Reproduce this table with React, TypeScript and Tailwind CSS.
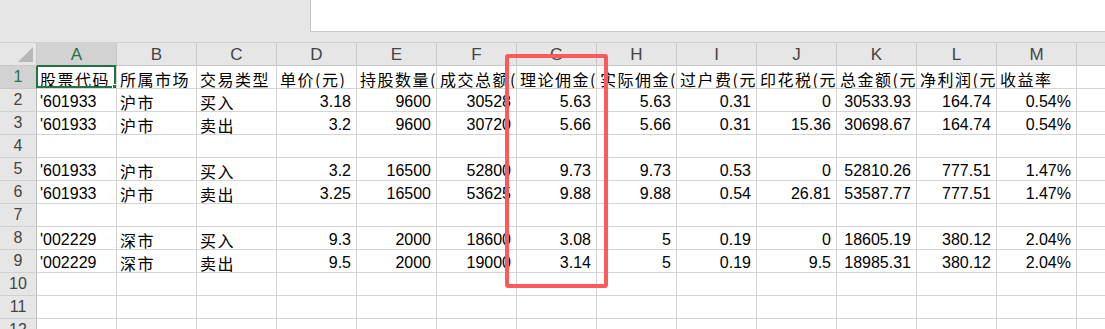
import React from "react";

type Kind = "t" | "n" | "c";
type Cell = [string, Kind];

const letters = ["A", "B", "C", "D", "E", "F", "G", "H", "I", "J", "K", "L", "M"];

const header: Cell[] = [
  ["股票代码", "t"],
  ["所属市场", "t"],
  ["交易类型", "t"],
  ["单价(元)", "t"],
  ["持股数量(股)", "t"],
  ["成交总额(元)", "t"],
  ["理论佣金(元)", "t"],
  ["实际佣金(元)", "t"],
  ["过户费(元)", "t"],
  ["印花税(元)", "t"],
  ["总金额(元)", "t"],
  ["净利润(元)", "t"],
  ["收益率", "t"],
];

// one trade row: code, market, side, then the numeric columns
function trade(code: string, market: string, side: string, nums: string[]): Cell[] {
  return [
    [code, "c"],
    [market, "t"],
    [side, "t"],
    ...nums.map((v) => [v, "n"] as Cell),
  ];
}

const rows: (Cell[] | null)[] = [
  header,
  trade("'601933", "沪市", "买入", ["3.18", "9600", "30528", "5.63", "5.63", "0.31", "0", "30533.93", "164.74", "0.54%"]),
  trade("'601933", "沪市", "卖出", ["3.2", "9600", "30720", "5.66", "5.66", "0.31", "15.36", "30698.67", "164.74", "0.54%"]),
  null,
  trade("'601933", "沪市", "买入", ["3.2", "16500", "52800", "9.73", "9.73", "0.53", "0", "52810.26", "777.51", "1.47%"]),
  trade("'601933", "沪市", "卖出", ["3.25", "16500", "53625", "9.88", "9.88", "0.54", "26.81", "53587.77", "777.51", "1.47%"]),
  null,
  trade("'002229", "深市", "买入", ["9.3", "2000", "18600", "3.08", "5", "0.19", "0", "18605.19", "380.12", "2.04%"]),
  trade("'002229", "深市", "卖出", ["9.5", "2000", "19000", "3.14", "5", "0.19", "9.5", "18985.31", "380.12", "2.04%"]),
  null,
  null,
  null,
];

function DataCell({ cell, selected }: { cell?: Cell; selected?: boolean }) {
  const kind = cell?.[1];
  return (
    <div
      className={
        "relative h-[23px] border-r border-b border-[#d4d4d4] bg-white flex items-end overflow-hidden whitespace-nowrap leading-[18px] text-[16px] text-black " +
        (kind === "n" ? "justify-end pr-[5px] font-['Liberation_Sans',sans-serif] " : "pl-[3px] ") +
        (kind === "t" ? "font-['Noto_Sans_CJK_SC',sans-serif] tracking-[1.5px] " : "") +
        (kind === "c" ? "font-['Liberation_Sans',sans-serif] " : "")
      }
    >
      {cell?.[0]}
      {selected && (
        <>
          <div className="absolute -left-px -top-px right-0 bottom-0 border-2 border-[#217346]" />
          <div className="absolute -right-[3px] -bottom-[3px] w-[7px] h-[7px] bg-[#217346] border border-white" />
        </>
      )}
    </div>
  );
}

export default function App() {
  return (
    <div className="relative w-full h-screen overflow-hidden bg-[#e6e6e6] font-['Liberation_Sans',sans-serif]">
      {/* formula bar strip */}
      <div className="h-[43px] flex border-b border-[#d0d0d0]">
        <div className="w-[310px]" />
        <div className="flex-1 h-[32px] bg-white border-l border-b border-[#c6c6c6]" />
      </div>

      <div className="grid grid-cols-[37px_repeat(13,80px)_1fr]">
        {/* column headers */}
        <div className="relative h-[23px] border-r border-b border-[#c8c8c8] bg-[#e6e6e6]">
          <svg className="absolute right-[3px] bottom-[3px]" width="15" height="15" viewBox="0 0 15 15">
            <polygon points="15,0 15,15 0,15" fill="#b8b8b8" />
          </svg>
        </div>
        {letters.map((l, i) => (
          <div
            key={l}
            className={
              "h-[23px] flex items-center justify-center border-r border-b border-[#c8c8c8] text-[17px] leading-none " +
              (i === 0 ? "bg-[#d2d2d2] text-[#217346] border-b-[#217346]" : "bg-[#e6e6e6] text-[#444]")
            }
          >
            {l}
          </div>
        ))}
        <div className="h-[23px] border-b border-[#c8c8c8] bg-[#e6e6e6]" />

        {rows.map((row, r) => (
          <React.Fragment key={r}>
            <div
              className={
                "h-[23px] flex items-end justify-center pb-[2px] border-r border-b text-[16px] leading-[18px] " +
                (r === 0
                  ? "bg-[#d2d2d2] text-[#217346] border-r-[#217346] border-b-[#c8c8c8]"
                  : "bg-[#e6e6e6] text-[#444] border-r-[#c0c0c0] border-b-[#d0d0d0]")
              }
            >
              {r + 1}
            </div>
            {letters.map((l, c) => (
              <DataCell key={l} cell={row ? row[c] : undefined} selected={r === 0 && c === 0} />
            ))}
            <div className="h-[23px] border-b border-[#d4d4d4] bg-white" />
          </React.Fragment>
        ))}
      </div>

      {/* red highlight around column G */}
      <div className="absolute left-[505px] top-[54px] w-[103px] h-[234px] border-4 border-[#ff5a5a] rounded-[3px]" />
    </div>
  );
}
